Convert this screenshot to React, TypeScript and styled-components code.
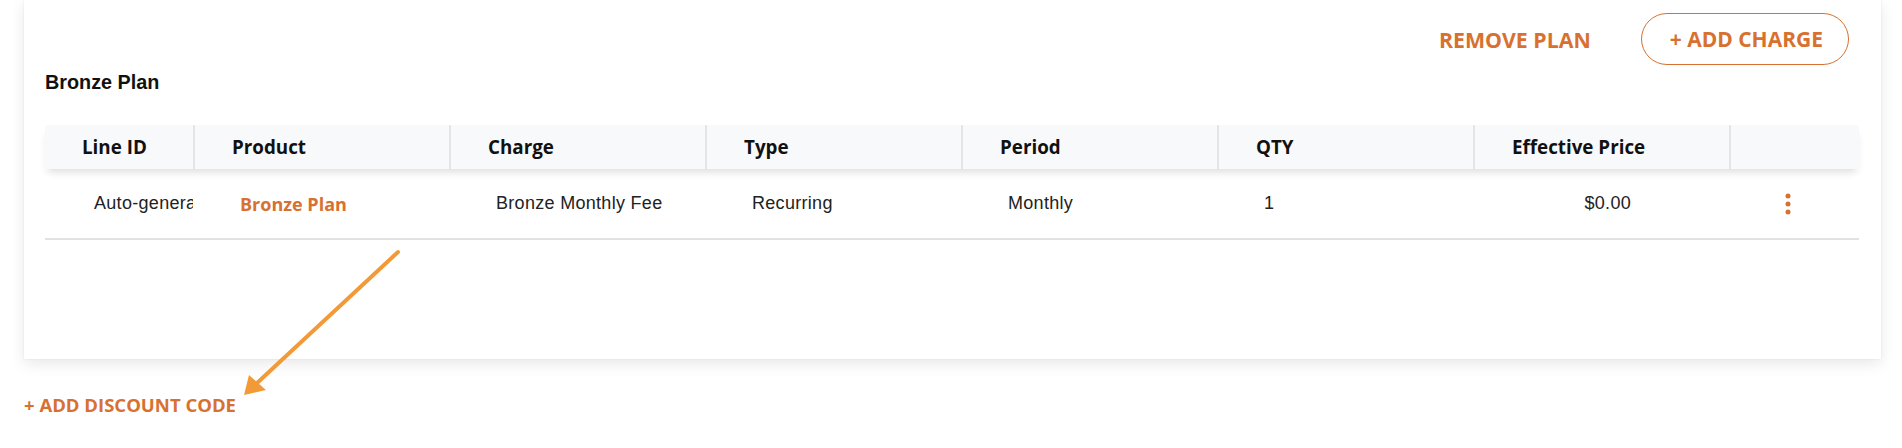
import styled, { createGlobalStyle } from "styled-components"

const GlobalStyle = createGlobalStyle`
  html, body {
    margin: 0;
    padding: 0;
    background: #ffffff;
  }
  * {
    box-sizing: border-box;
  }
`

const ORANGE = "#d8712f"

const Page = styled.div`
  position: relative;
  width: 1902px;
  height: 448px;
  padding: 0 21px 0 24px;
  font-family: "Open Sans", "Noto Sans", sans-serif;
  overflow: hidden;
`

const Card = styled.div`
  background: #ffffff;
  padding: 13px 22px 119px 21px;
  box-shadow: 0 5px 14px rgba(0, 0, 0, 0.09), 0 0 2px rgba(0, 0, 0, 0.08);
`

const Actions = styled.div`
  display: flex;
  justify-content: flex-end;
  align-items: center;
  gap: 50px;
  padding-right: 10px;
  height: 52px;
`

const TextButton = styled.button`
  border: none;
  background: none;
  padding: 0;
  font-family: "Open Sans", sans-serif;
  font-weight: 700;
  font-size: 21.3px;
  color: ${ORANGE};
  cursor: pointer;
`

const OutlineButton = styled(TextButton)`
  height: 52px;
  padding: 0 25px 0 28px;
  border: 1px solid ${ORANGE};
  border-radius: 26px;
  font-size: 21px;
`

const Title = styled.h3`
  margin: 5px 0 0;
  font-family: "Liberation Sans", Arial, sans-serif;
  font-weight: 700;
  font-size: 19.8px;
  line-height: 24px;
  color: #111;
`

const Table = styled.div`
  margin-top: 31px;
`

const columns = "148px repeat(6, 256px) 1fr"

const HeadRow = styled.div`
  position: relative;
  z-index: 1;
  display: grid;
  grid-template-columns: ${columns};
  height: 44px;
  background: #f8f9fb;
  border-radius: 4px 4px 0 0;
  box-shadow: 0 6px 9px -3px rgba(0, 0, 0, 0.14);
`

const HeadCell = styled.div<{ $first?: boolean }>`
  display: flex;
  align-items: center;
  padding-left: 37px;
  border-left: ${(p) => (p.$first ? "none" : "2px solid #e3e5ea")};
  font-family: "Open Sans", sans-serif;
  font-weight: 700;
  font-size: 18.8px;
  color: #111;
  white-space: nowrap;
`

const BodyRow = styled.div`
  display: grid;
  grid-template-columns: ${columns};
  height: 71px;
  border-bottom: 2px solid #e2e2e4;
`

const Cell = styled.div<{ $align?: "left" | "right" | "center" }>`
  display: flex;
  align-items: center;
  justify-content: ${(p) =>
    p.$align === "right" ? "flex-end" : p.$align === "center" ? "center" : "flex-start"};
  padding-left: ${(p) => (p.$align ? "0" : "47px")};
  padding-right: ${(p) => (p.$align === "right" ? "98px" : "0")};
  overflow: hidden;
  white-space: nowrap;
  font-family: "Liberation Sans", Arial, sans-serif;
  font-size: 18px;
  letter-spacing: 0.3px;
  color: #222;
`

const ProductLink = styled.a`
  font-family: "Open Sans", sans-serif;
  font-weight: 700;
  font-size: 18px;
  letter-spacing: 0;
  color: ${ORANGE};
  text-decoration: none;
  cursor: pointer;
`

const MenuIcon = styled.svg`
  width: 10px;
  height: 24px;
  margin-left: -12px;
  cursor: pointer;
`

const DiscountLink = styled(TextButton)`
  display: block;
  margin-top: 33px;
  font-size: 18.5px;
  line-height: 25px;
`

const Annotation = styled.svg`
  position: absolute;
  left: 0;
  top: 0;
  width: 1902px;
  height: 448px;
  pointer-events: none;
`

const headers = ["Line ID", "Product", "Charge", "Type", "Period", "QTY", "Effective Price", ""]

const line = {
  id: "Auto-generated",
  product: "Bronze Plan",
  charge: "Bronze Monthly Fee",
  type: "Recurring",
  period: "Monthly",
  qty: 1,
  price: "$0.00",
}

export default function App() {
  return (
    <>
      <GlobalStyle />
      <Page>
        <Card>
          <Actions>
            <TextButton>REMOVE PLAN</TextButton>
            <OutlineButton>+ ADD CHARGE</OutlineButton>
          </Actions>
          <Title>Bronze Plan</Title>
          <Table>
            <HeadRow>
              {headers.map((h, i) => (
                <HeadCell key={i} $first={i === 0}>
                  {h}
                </HeadCell>
              ))}
            </HeadRow>
            <BodyRow>
              <Cell style={{ paddingLeft: 49 }}>{line.id}</Cell>
              <Cell>
                <ProductLink>{line.product}</ProductLink>
              </Cell>
              <Cell>{line.charge}</Cell>
              <Cell>{line.type}</Cell>
              <Cell>{line.period}</Cell>
              <Cell>{line.qty}</Cell>
              <Cell $align="right">{line.price}</Cell>
              <Cell $align="center">
                <MenuIcon viewBox="0 0 10 24">
                  <circle cx="5" cy="4" r="2.5" fill={ORANGE} />
                  <circle cx="5" cy="12" r="2.5" fill={ORANGE} />
                  <circle cx="5" cy="20" r="2.5" fill={ORANGE} />
                </MenuIcon>
              </Cell>
            </BodyRow>
          </Table>
        </Card>
        <DiscountLink>+ ADD DISCOUNT CODE</DiscountLink>
        <Annotation viewBox="0 0 1902 448">
          <line x1="398" y1="252" x2="256" y2="384" stroke="#f39a38" strokeWidth="4" strokeLinecap="round" />
          <polygon points="244,395 249,375 266,390" fill="#f39a38" />
        </Annotation>
      </Page>
    </>
  )
}
